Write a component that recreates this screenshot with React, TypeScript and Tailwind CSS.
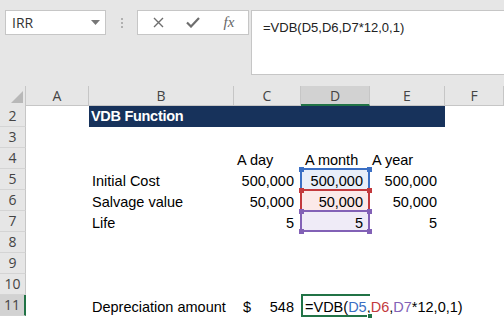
import React from "react";

const COLS = ["A", "B", "C", "D", "E", "F"];
const WIDTHS = ["w-[63px]", "w-[145px]", "w-[67px]", "w-[69px]", "w-[75px]", "flex-1"];

const cellFont = { fontFamily: '"Liberation Sans", Arial, sans-serif' };
const uiFont = { fontFamily: '"Open Sans", "Liberation Sans", sans-serif' };

type Box = { border: string; fill: string; handle: string; bottom: boolean };

// colored reference boxes around D5:D7
const refBox: Record<number, Box> = {
  5: { border: "border-[#3b6fc4]", fill: "bg-[#e8eef9]", handle: "bg-[#3b6fc4]", bottom: false },
  6: { border: "border-[#c3393d]", fill: "bg-[#fbe9e9]", handle: "bg-[#c3393d]", bottom: false },
  7: { border: "border-[#8261b6]", fill: "bg-[#efebf7]", handle: "bg-[#8261b6]", bottom: true },
};

const rows: { n: number; b?: string; c?: string; d?: string; e?: string; left?: boolean }[] = [
  { n: 2 },
  { n: 3 },
  { n: 4, c: "A day", d: "A month", e: "A year", left: true },
  { n: 5, b: "Initial Cost", c: "500,000", d: "500,000", e: "500,000" },
  { n: 6, b: "Salvage value", c: "50,000", d: "50,000", e: "50,000" },
  { n: 7, b: "Life", c: "5", d: "5", e: "5" },
  { n: 8 },
  { n: 9 },
  { n: 10 },
];

function RowHead({ n, active }: { n: number; active?: boolean }) {
  return (
    <div
      className={`w-[26px] h-full shrink-0 flex items-center justify-center text-[14px] text-[#444] border-b border-[#d4d4d4] ${
        active ? "bg-[#d2d2d2] border-r-2 border-r-[#217346]" : "bg-[#e6e6e6] border-r border-r-[#c6c6c6]"
      }`}
      style={uiFont}
    >
      {n}
    </div>
  );
}

function Handle({ cls, pos }: { cls: string; pos: string }) {
  return <div className={`absolute w-[5px] h-[5px] ${cls} ${pos}`} />;
}

function DCell({ n, text }: { n: number; text?: string }) {
  const box = refBox[n];
  if (!box) {
    return <div className={`${WIDTHS[3]} h-full shrink-0 flex items-end pb-[2px] pl-[4px]`}>{text}</div>;
  }
  return (
    <div className={`${WIDTHS[3]} h-full shrink-0 relative ${box.fill}`}>
      <div
        className={`absolute -left-[1px] right-0 -top-[1px] ${box.bottom ? "bottom-0 border-b-2" : "-bottom-[1px]"} border-l-2 border-r-2 border-t-2 ${box.border}`}
      />
      <div className="relative h-full flex items-end justify-end pb-[2px] pr-[7px]">{text}</div>
      <Handle cls={box.handle} pos="-left-[2px] -top-[2px]" />
      <Handle cls={box.handle} pos="-right-[2px] -top-[2px]" />
      {box.bottom && <Handle cls={box.handle} pos="-left-[2px] -bottom-[2px]" />}
      {box.bottom && <Handle cls={box.handle} pos="-right-[2px] -bottom-[2px]" />}
    </div>
  );
}

export default function App() {
  return (
    <div className="w-[504px] h-[319px] overflow-hidden bg-white text-[#000]" style={cellFont}>
      {/* formula area */}
      <div className="h-[86px] bg-[#e6e6e6] flex items-start pt-[10px]">
        <div className="ml-[5px] w-[101px] h-[25px] bg-white border border-[#c6c6c6] flex items-center justify-between pl-[6px] pr-[5px]">
          <span className="text-[14px] text-[#333]" style={uiFont}>IRR</span>
          <svg width="9" height="5" viewBox="0 0 9 5">
            <path d="M0 0h9L4.5 5z" fill="#777" />
          </svg>
        </div>
        <div className="w-[31px] h-[25px] flex flex-col items-center justify-center gap-[2px]">
          <div className="w-[2px] h-[2px] bg-[#b0b0b0]" />
          <div className="w-[2px] h-[2px] bg-[#b0b0b0]" />
          <div className="w-[2px] h-[2px] bg-[#b0b0b0]" />
        </div>
        <div className="w-[112px] h-[25px] bg-white border border-[#c6c6c6] flex items-center">
          <div className="w-[38px] flex justify-center pl-[2px]">
            <svg width="11" height="11" viewBox="0 0 11 11">
              <path d="M1 1l9 9M10 1l-9 9" stroke="#6e6e6e" strokeWidth="1.4" />
            </svg>
          </div>
          <div className="w-[34px] flex justify-center">
            <svg width="14" height="11" viewBox="0 0 14 11">
              <path d="M1 5.5l4 4L13 1" stroke="#6e6e6e" strokeWidth="2.2" fill="none" />
            </svg>
          </div>
          <div
            className="w-[38px] flex justify-center text-[15px] italic text-[#666]"
            style={{ fontFamily: '"Liberation Serif", serif' }}
          >
            fx
          </div>
        </div>
        <div className="ml-[2px] flex-1 h-[65px] bg-white border-l border-b border-t border-[#c6c6c6] pl-[11px] pt-[4px]">
          <span className="text-[13px] text-[#222]" style={cellFont}>=VDB(D5,D6,D7*12,0,1)</span>
        </div>
      </div>

      {/* column headers */}
      <div className="h-[20px] flex bg-[#e6e6e6] text-[14px] text-[#444]" style={uiFont}>
        <div className="w-[26px] shrink-0 border-r border-[#c6c6c6] flex items-end justify-end pr-[2px] pb-[3px]">
          <svg width="12" height="12" viewBox="0 0 12 12">
            <path d="M12 0V12H0z" fill="#b8b8b8" />
          </svg>
        </div>
        {COLS.map((c, i) => (
          <div
            key={c}
            className={`${WIDTHS[i]} shrink-0 flex items-center justify-center border-r border-[#c6c6c6] ${
              c === "D" ? "bg-[#d2d2d2] border-b-2 border-b-[#217346]" : "border-b border-b-[#c6c6c6]"
            }`}
          >
            {c}
          </div>
        ))}
      </div>

      {/* sheet rows */}
      {rows.map((r) => (
        <div key={r.n} className="h-[21px] flex text-[14.5px] leading-none">
          <RowHead n={r.n} />
          <div className={`${WIDTHS[0]} h-full shrink-0`} />
          {r.n === 2 ? (
            <div className="w-[356px] h-full shrink-0 bg-[#17325b] text-white font-bold flex items-center pl-[2px] tracking-[-0.3px]">
              VDB Function
            </div>
          ) : (
            <>
              <div className={`${WIDTHS[1]} h-full shrink-0 flex items-end pb-[2px] pl-[3px]`}>{r.b}</div>
              <div
                className={`${WIDTHS[2]} h-full shrink-0 flex items-end pb-[2px] ${
                  r.left ? "pl-[3px]" : "justify-end pr-[7px]"
                }`}
              >
                {r.c}
              </div>
              <DCell n={r.n} text={r.d} />
              <div
                className={`${WIDTHS[4]} h-full shrink-0 flex items-end pb-[2px] ${
                  r.left ? "pl-[2px]" : "justify-end pr-[8px]"
                }`}
              >
                {r.e}
              </div>
            </>
          )}
        </div>
      ))}

      {/* row 11: editing cell */}
      <div className="h-[21px] flex text-[14.5px] leading-none">
        <RowHead n={11} active />
        <div className={`${WIDTHS[0]} h-full shrink-0`} />
        <div className={`${WIDTHS[1]} h-full shrink-0 flex items-end pb-[2px] pl-[3px]`}>Depreciation amount</div>
        <div className={`${WIDTHS[2]} h-full shrink-0 flex items-end justify-between pb-[2px] pl-[9px] pr-[7px]`}>
          <span>$</span>
          <span>548</span>
        </div>
        <div className={`${WIDTHS[3]} h-[23px] -mt-[1px] shrink-0 relative border-l-2 border-t-2 border-b-2 border-[#217346]`}>
          <div className="absolute left-0 top-0 bottom-0 w-[160px] bg-white flex items-end pb-[1px] pl-[2px] whitespace-nowrap">
            <span>=VDB(</span>
            <span className="text-[#3b6fc4]">D5</span>
            <span>,</span>
            <span className="text-[#c3393d]">D6</span>
            <span>,</span>
            <span className="text-[#8261b6]">D7</span>
            <span>*12,0,1)</span>
            <span className="ml-[2px] w-[1.5px] h-[19px] bg-black" />
          </div>
          <div className="absolute -right-[3px] -bottom-[4px] w-[6px] h-[6px] bg-[#217346] border border-white" />
        </div>
      </div>
    </div>
  );
}
